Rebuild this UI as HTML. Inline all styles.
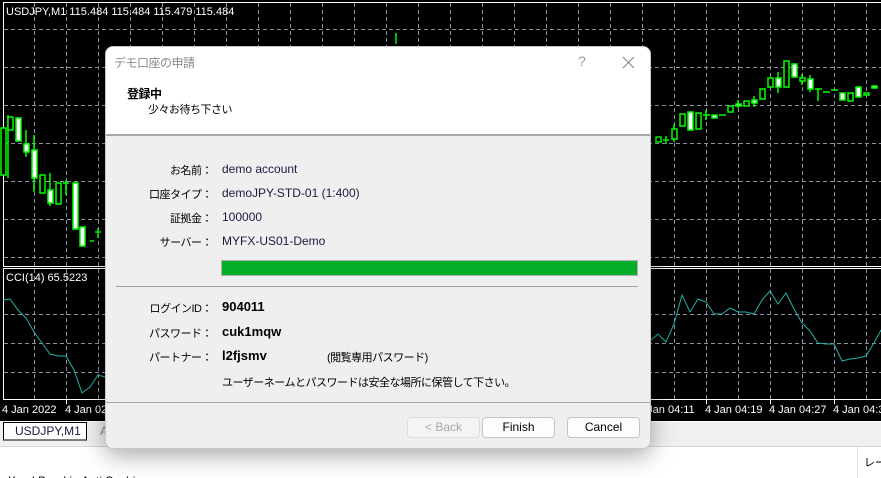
<!DOCTYPE html>
<html><head><meta charset="utf-8"><style>
*{margin:0;padding:0;box-sizing:border-box}
body{width:881px;height:478px;overflow:hidden;background:#fff;position:relative;font-family:"Liberation Sans","Noto Sans CJK JP",sans-serif;font-size:12px;color:#000}
.abs{position:absolute;white-space:nowrap}
.jp{font-size:11px;letter-spacing:-0.5px}
#dlg{position:absolute;left:105px;top:46px;width:546px;height:403px;background:#efefef;border:1px solid #c8c8c8;border-radius:8px;overflow:hidden;box-shadow:0 6px 24px rgba(0,0,0,.35)}
#hdr{position:absolute;left:0;top:0;width:100%;height:89px;background:#fff;border-bottom:2px solid #a8a8a8}
.lab{position:absolute;right:438px;text-align:right;white-space:nowrap;font-size:11px;letter-spacing:-0.5px}
.val{position:absolute;left:116px;white-space:nowrap;color:#1a1a40}
.b{font-weight:bold;color:#000;font-size:13px;margin-top:-1px}
.btn{position:absolute;top:370px;width:73px;height:21px;border:1px solid #c4c4c4;border-radius:4px;background:#fdfdfd;text-align:center;line-height:19px;font-size:12px}
</style></head><body>
<svg class="abs" style="left:0;top:0" width="881" height="478">
<rect x="0" y="0" width="881" height="421" fill="#000"/>
<rect x="0" y="421" width="881" height="25" fill="#f0f0f0"/>
<line x1="0" y1="421.5" x2="881" y2="421.5" stroke="#fff"/>
<line x1="0" y1="446.5" x2="881" y2="446.5" stroke="#d8d8d8"/>
<rect x="3.5" y="2.5" width="880" height="264" fill="none" stroke="#fff"/>
<rect x="3.5" y="268.5" width="880" height="131" fill="none" stroke="#fff"/>
<g stroke="#8a93a0" stroke-dasharray="4,3" stroke-width="1">
<path d="M4 29.5H881M4 67.5H881M4 105.5H881M4 143.5H881M4 181.5H881M4 219.5H881M4 257.5H881M4 314.5H881M4 343.5H881M4 372.5H881"/>
<path d="M34.5 3V266M66.5 3V266M98.5 3V266M130.5 3V266M162.5 3V266M194.5 3V266M226.5 3V266M258.5 3V266M290.5 3V266M322.5 3V266M354.5 3V266M386.5 3V266M418.5 3V266M450.5 3V266M482.5 3V266M514.5 3V266M546.5 3V266M578.5 3V266M610.5 3V266M642.5 3V266M674.5 3V266M706.5 3V266M738.5 3V266M770.5 3V266M802.5 3V266M834.5 3V266M866.5 3V266"/>
<path d="M34.5 269V399M66.5 269V399M98.5 269V399M674.5 269V399M706.5 269V399M738.5 269V399M770.5 269V399M802.5 269V399M834.5 269V399M866.5 269V399"/>
</g>
<g stroke="#fff"><path d="M66.5 399V404M130.5 399V404M706.5 399V404M770.5 399V404M834.5 399V404"/></g>
<g stroke="#00ff00" stroke-width="1.5">
<path d="M396 33V44M8 115V178M26 130V157M34 135V192M50 173V206M66 180V195M98 228V238M106 235V260M90 241H94M63 183H69M95 232H101M666 136V144M663 140H669M706 110V120M703 115H710M719 115H726M738 100V108M754 96V107M818 89V101M815 89H822M823 92H830M831 90H838M674 124V142M778 72V93M802 74V85M810 75V92"/>
</g>
<g stroke="#00ff00" stroke-width="1.5" fill="#000">
<rect x="1" y="128" width="5" height="47"/><rect x="8" y="117" width="5" height="13"/><rect x="40" y="175" width="5" height="18"/><rect x="56" y="183" width="5" height="21"/>
<rect x="656" y="137" width="5" height="5"/><rect x="672" y="129" width="5" height="10"/><rect x="680" y="114" width="5" height="12"/><rect x="696" y="113" width="5" height="16"/><rect x="728" y="106" width="5" height="6"/><rect x="744" y="101" width="5" height="5"/><rect x="760" y="89" width="5" height="10"/><rect x="768" y="78" width="5" height="9"/><rect x="784" y="61" width="5" height="26"/><rect x="800" y="78" width="5" height="3"/><rect x="848" y="93" width="5" height="8"/><rect x="864" y="93" width="5" height="2"/>
</g>
<g stroke="#00ff00" stroke-width="1.5" fill="#fff">
<rect x="16" y="118" width="5" height="23"/><rect x="24" y="144" width="5" height="8"/><rect x="32" y="150" width="5" height="28"/><rect x="48" y="190" width="5" height="13"/><rect x="73" y="183" width="5" height="46"/><rect x="80" y="227" width="5" height="19"/>
<rect x="688" y="112" width="5" height="18"/><rect x="712" y="115" width="5" height="3"/><rect x="736" y="104" width="5" height="2"/><rect x="752" y="100" width="5" height="3"/><rect x="776" y="78" width="5" height="9"/><rect x="792" y="64" width="5" height="13"/><rect x="808" y="79" width="5" height="10"/><rect x="840" y="93" width="5" height="7"/><rect x="856" y="87" width="5" height="10"/><rect x="872" y="86" width="5" height="2"/>
</g>
<polyline fill="none" stroke="#20b2aa" stroke-width="1" points="3,300 10,299 18,310 26,318 34,332 42,343 50,354 58,356 66,356 74,370 82,393 90,387 98,375 105,377"/>
<polyline fill="none" stroke="#20b2aa" stroke-width="1" points="651,340 658,334 666,342 674,324 682,295 690,312 698,299 706,302 714,314 722,314 730,308 738,312 746,312 754,314 762,300 770,291 778,304 786,293 794,309 802,323 810,331 818,343 826,344 834,344 842,361 850,359 858,358 866,356 874,343 881,330"/>
<g fill="#fff" font-family="Liberation Sans,sans-serif" font-size="11">
<text x="6" y="15">USDJPY,M1  115.484 115.484 115.479 115.484</text>
<text x="6" y="281">CCI(14) 65.5223</text>
<text x="2" y="413">4 Jan 2022</text><text x="65" y="413">4 Jan 02:5</text>
<text x="638" y="413">4 Jan 04:11</text><text x="705" y="413">4 Jan 04:19</text><text x="769" y="413">4 Jan 04:27</text><text x="833" y="413">4 Jan 04:35</text>
</g>
<path d="M3.5 440V422.5H86.5V440Z" fill="#fff" stroke="#000"/>
<text x="15" y="435" font-family="Liberation Sans,sans-serif" font-size="12" fill="#1a1a40">USDJPY,M1</text>
<text x="100" y="435" font-family="Liberation Sans,sans-serif" font-size="12" fill="#888">A</text>
<line x1="857.5" y1="447" x2="857.5" y2="478" stroke="#ddd"/>
<text x="864" y="466" font-family="Noto Sans CJK JP,sans-serif" font-size="11">レー</text>
<text x="8" y="485" font-family="Liberation Sans,sans-serif" font-size="12">Kyml Breakin Anti Suchin</text>
</svg>
<div id="dlg">
<div id="hdr">
<div class="abs jp" style="left:8px;top:7px;font-size:12px;color:#8a8a8a">デモ口座の申請</div>
<div class="abs" style="left:472px;top:6px;font-size:14px;color:#999">?</div>
<svg class="abs" style="left:516px;top:9px" width="13" height="13"><path d="M1 1L12 12M12 1L1 12" stroke="#888" stroke-width="1.1"/></svg>
<div class="abs jp" style="left:21px;top:38px;font-weight:bold;font-size:12px">登録中</div>
<div class="abs jp" style="left:42px;top:54px">少々お待ち下さい</div>
</div>
<div class="lab" style="top:115px">お名前：</div><div class="val" style="top:115px">demo account</div>
<div class="lab" style="top:139px">口座タイプ：</div><div class="val" style="top:139px">demoJPY-STD-01 (1:400)</div>
<div class="lab" style="top:163px">証拠金：</div><div class="val" style="top:163px">100000</div>
<div class="lab" style="top:187px">サーバー：</div><div class="val" style="top:187px">MYFX-US01-Demo</div>
<div class="abs" style="left:115px;top:213px;width:417px;height:16px;background:#06ad26;border:1px solid #b0b0b0"></div>
<div class="abs" style="left:10px;top:239px;width:522px;height:1px;background:#a0a0a0"></div>
<div class="lab" style="top:253px">ログインID：</div><div class="val b" style="top:253px">904011</div>
<div class="lab" style="top:278px">パスワード：</div><div class="val b" style="top:278px">cuk1mqw</div>
<div class="lab" style="top:302px">パートナー：</div><div class="val b" style="top:302px">l2fjsmv</div>
<div class="abs jp" style="left:221px;top:302px">(閲覧専用パスワード)</div>
<div class="abs jp" style="left:116px;top:327px">ユーザーネームとパスワードは安全な場所に保管して下さい。</div>
<div class="abs" style="left:0;top:355px;width:546px;height:1px;background:#a8a8a8"></div>
<div class="btn" style="left:301px;color:#a8a8a8;background:#f4f4f4;border-color:#ddd">&lt; Back</div>
<div class="btn" style="left:376px">Finish</div>
<div class="btn" style="left:461px">Cancel</div>
</div>
</body></html>
